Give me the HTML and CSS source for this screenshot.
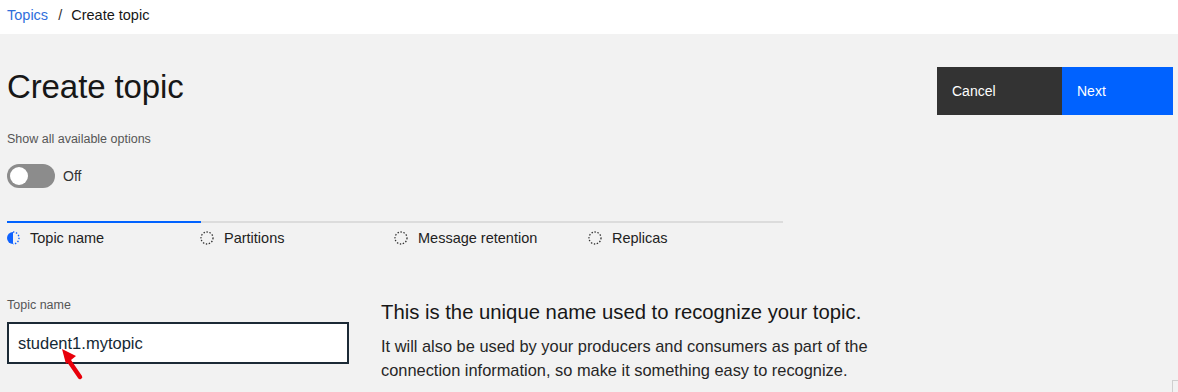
FILE: index.html
```html
<!DOCTYPE html>
<html lang="en">
<head>
    <meta charset="UTF-8">
    <meta name="viewport" content="width=device-width, initial-scale=1.0">
    <title>Create topic</title>
    <link rel="stylesheet" href="styles.css">
</head>
<body>
    <nav class="breadcrumb">
        <a href="#" class="crumb-link">Topics</a>
        <span class="crumb-sep">/</span>
        <span class="crumb-current">Create topic</span>
    </nav>

    <main class="page">
        <div class="page-header">
            <div class="header-left">
                <h1 class="page-title">Create topic</h1>
                <div class="options-label">Show all available options</div>
                <div class="toggle-row">
                    <span class="toggle"><span class="toggle-knob"></span></span>
                    <span class="toggle-text">Off</span>
                </div>
            </div>
            <div class="actions">
                <button class="btn btn-secondary">Cancel</button>
                <button class="btn btn-primary">Next</button>
            </div>
        </div>

        <!-- Indicador de pasos -->
        <ol class="steps">
            <li class="step step-current">
                <svg class="step-icon" viewBox="0 0 14 14" width="14" height="14">
                    <path d="M7 1 A6 6 0 0 0 7 13 Z" fill="#0f62fe"/>
                    <path d="M7 1 A6 6 0 0 1 7 13" fill="none" stroke="#0f62fe" stroke-width="1.4" stroke-dasharray="1.4 1.6"/>
                </svg>
                <span>Topic name</span>
            </li>
            <li class="step">
                <svg class="step-icon" viewBox="0 0 14 14" width="14" height="14">
                    <circle cx="7" cy="7" r="6" fill="none" stroke="#333" stroke-width="1.3" stroke-dasharray="1.4 1.6"/>
                </svg>
                <span>Partitions</span>
            </li>
            <li class="step">
                <svg class="step-icon" viewBox="0 0 14 14" width="14" height="14">
                    <circle cx="7" cy="7" r="6" fill="none" stroke="#333" stroke-width="1.3" stroke-dasharray="1.4 1.6"/>
                </svg>
                <span>Message retention</span>
            </li>
            <li class="step">
                <svg class="step-icon" viewBox="0 0 14 14" width="14" height="14">
                    <circle cx="7" cy="7" r="6" fill="none" stroke="#333" stroke-width="1.3" stroke-dasharray="1.4 1.6"/>
                </svg>
                <span>Replicas</span>
            </li>
        </ol>

        <div class="form-section">
            <div class="field">
                <label class="field-label" for="topicName">Topic name</label>
                <div class="input-wrap">
                    <input type="text" class="text-input" id="topicName" value="student1.mytopic">
                    <!-- flecha de anotación -->
                    <svg class="annotation" viewBox="0 0 24 34" width="24" height="34">
                        <path d="M20 30 L9 14" stroke="#e8000b" stroke-width="4.5" stroke-linecap="round"/>
                        <path d="M2 2 L16 9 L6 17 Z" fill="#e8000b"/>
                    </svg>
                </div>
            </div>
            <div class="field-help">
                <h2 class="help-title">This is the unique name used to recognize your topic.</h2>
                <p class="help-text">It will also be used by your producers and consumers as part of the connection information, so make it something easy to recognize.</p>
            </div>
        </div>
        <div class="corner-box"></div>
    </main>
</body>
</html>
```

FILE: styles.css
```css
:root {
    --page-bg: #f2f2f2;
    --text-color: #171717;
    --muted: #565656;
    --primary-blue: #0062ff;
    --dark-button: #333333;
}

* {
    box-sizing: border-box;
}

body {
    font-family: 'Liberation Sans', Arial, sans-serif;
    background-color: var(--page-bg);
    color: var(--text-color);
    margin: 0;
    height: 392px;
    overflow: hidden;
}

.breadcrumb {
    background-color: #fff;
    height: 34px;
    padding: 6px 7px 0;
    font-size: 14.5px;
    line-height: 18px;
}

.crumb-link {
    color: #2f6fdb;
    text-decoration: none;
}

.crumb-sep {
    margin: 0 5px 0 6px;
    color: #333;
}

.page {
    position: relative;
    padding: 0 5px 0 7px;
    height: 358px;
}

.page-header {
    display: flex;
    justify-content: space-between;
    align-items: flex-start;
}

.page-title {
    margin: 33px 0 0;
    font-size: 33px;
    font-weight: 400;
    line-height: 40px;
    letter-spacing: -0.1px;
}

.options-label {
    margin-top: 24px;
    font-size: 12.5px;
    line-height: 16px;
    color: var(--muted);
}

.toggle-row {
    display: flex;
    align-items: center;
    gap: 8px;
    margin-top: 17px;
    font-size: 14px;
    color: #333;
}

.toggle {
    display: flex;
    align-items: center;
    width: 48px;
    height: 24px;
    border-radius: 12px;
    background-color: #8c8c8c;
    padding: 3px;
}

.toggle-knob {
    width: 18px;
    height: 18px;
    border-radius: 50%;
    background-color: #fff;
}

.actions {
    display: flex;
    margin-top: 33px;
}

.btn {
    height: 48px;
    border: none;
    font-family: inherit;
    font-size: 14px;
    color: #fff;
    text-align: left;
    padding: 0 15px;
    cursor: pointer;
}

.btn-secondary {
    width: 125px;
    background-color: var(--dark-button);
}

.btn-primary {
    width: 111px;
    background-color: var(--primary-blue);
}

.steps {
    list-style: none;
    display: flex;
    width: 776px;
    margin: 33px 0 0;
    padding: 0;
}

.step {
    flex: 0 0 194px;
    display: flex;
    align-items: center;
    gap: 10px;
    border-top: 2px solid #dcdcdc;
    padding-top: 6px;
    font-size: 14.5px;
    line-height: 18px;
    color: #222;
}

.step-current {
    border-top-color: var(--primary-blue);
}

.step-icon {
    flex: none;
    margin-left: -1px;
}

.form-section {
    display: flex;
    margin-top: 50px;
}

.field {
    flex: 0 0 342px;
}

.field-label {
    display: block;
    font-size: 12.5px;
    line-height: 16px;
    color: var(--muted);
}

.input-wrap {
    position: relative;
    margin-top: 9px;
}

.text-input {
    width: 342px;
    height: 42px;
    border: 2px solid #1c2a36;
    background-color: #fff;
    padding: 0 9px;
    font-family: inherit;
    font-size: 16.5px;
    color: #152935;
    outline: none;
}

.annotation {
    position: absolute;
    left: 53px;
    top: 25px;
}

.field-help {
    margin-left: 32px;
    width: 520px;
}

.help-title {
    margin: 2px 0 0;
    font-size: 20.3px;
    font-weight: 400;
    line-height: 26px;
}

.help-text {
    margin: 9px 0 0;
    font-size: 16.4px;
    line-height: 24px;
    color: #262626;
}

.corner-box {
    position: absolute;
    right: -2px;
    bottom: -6px;
    width: 8px;
    height: 18px;
    border: 1px solid #cfcfcf;
    border-right: none;
    border-bottom: none;
}
```
